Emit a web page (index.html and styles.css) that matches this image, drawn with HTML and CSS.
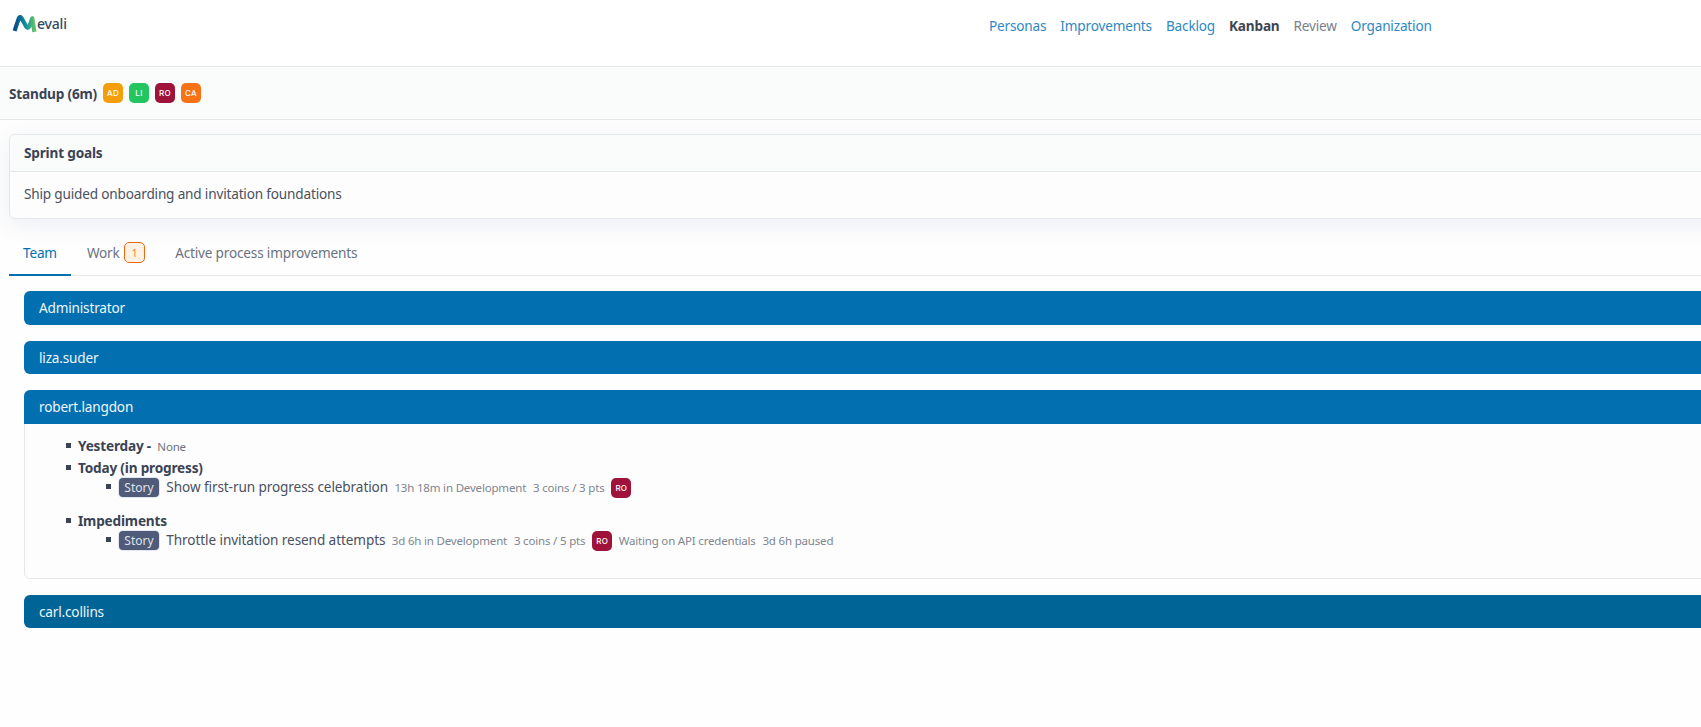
FILE: index.html
```html
<!DOCTYPE html>
<html lang="en">
<head>
    <meta charset="UTF-8">
    <title>Mevali - Kanban</title>
    <link rel="stylesheet" href="styles.css">
</head>
<body>
    <div class="page">
        <header class="topbar">
            <a class="logo" href="#">
                <svg class="logo-mark" width="25" height="21" viewBox="0 0 24 20">
                    <defs>
                        <linearGradient id="logoGrad" x1="0" y1="0" x2="1" y2="0">
                            <stop offset="0" stop-color="#0b4a88"/>
                            <stop offset="0.55" stop-color="#0f8f9f"/>
                            <stop offset="1" stop-color="#63c06a"/>
                        </linearGradient>
                    </defs>
                    <path d="M2.5 17 L6.5 5 Q7.5 2.8 9 4.5 L14 13.5 Q15.5 15 16.5 13 L19.5 5 L21.5 18" fill="none" stroke="url(#logoGrad)" stroke-width="4" stroke-linejoin="round"/>
                </svg>
                <span class="logo-text">evali</span>
            </a>
            <nav class="nav">
                <a href="#">Personas</a>
                <a href="#">Improvements</a>
                <a href="#">Backlog</a>
                <a href="#" class="active">Kanban</a>
                <a href="#" class="muted">Review</a>
                <a href="#">Organization</a>
            </nav>
        </header>

        <div class="standup">
            <strong>Standup (6m)</strong>
            <span class="avatar amber">AD</span>
            <span class="avatar green">LI</span>
            <span class="avatar wine">RO</span>
            <span class="avatar orange">CA</span>
        </div>

        <main class="content">
            <section class="card">
                <div class="card-head">Sprint goals</div>
                <div class="card-body">Ship guided onboarding and invitation foundations</div>
            </section>

            <div class="tabs">
                <a href="#" class="tab active">Team</a>
                <a href="#" class="tab">Work <span class="count">1</span></a>
                <a href="#" class="tab">Active process improvements</a>
            </div>

            <div class="team">
                <div class="panel"><div class="panel-head">Administrator</div></div>
                <div class="panel"><div class="panel-head">liza.suder</div></div>
                <div class="panel">
                    <div class="panel-head">robert.langdon</div>
                    <div class="panel-body">
                        <ul class="report">
                            <li><b>Yesterday -</b> <span class="meta none">None</span></li>
                            <li><b>Today (in progress)</b>
                                <ul>
                                    <li class="item"><span class="tag">Story</span>
                                        <span class="title">Show first-run progress celebration</span>
                                        <span class="meta">13h 18m in Development</span>
                                        <span class="meta">3 coins / 3 pts</span>
                                        <span class="avatar wine">RO</span>
                                    </li>
                                </ul>
                            </li>
                            <li><b>Impediments</b>
                                <ul>
                                    <li class="item"><span class="tag">Story</span>
                                        <span class="title">Throttle invitation resend attempts</span>
                                        <span class="meta">3d 6h in Development</span>
                                        <span class="meta">3 coins / 5 pts</span>
                                        <span class="avatar wine">RO</span>
                                        <span class="meta">Waiting on API credentials</span>
                                        <span class="meta">3d 6h paused</span>
                                    </li>
                                </ul>
                            </li>
                        </ul>
                    </div>
                </div>
                <div class="panel hover"><div class="panel-head">carl.collins</div></div>
            </div>
        </main>
    </div>
</body>
</html>
```

FILE: styles.css
```css
html, body {
    margin: 0;
    overflow-x: hidden;
    background: #fefefe;
}

body {
    font-family: "Noto Sans", "DejaVu Sans", sans-serif;
    font-size: 13.6px;
    letter-spacing: -0.18px;
    color: #334155;
}

a {
    text-decoration: none;
}

.page {
    width: 1800px;
}

.topbar {
    display: flex;
    height: 66px;
    border-bottom: 1px solid #e5e7f0;
    background: #fff;
}

.logo {
    display: flex;
    align-items: center;
    align-self: flex-start;
    margin: 13px 0 0 12px;
    width: 977px;
}

.logo-text {
    font-size: 14px;
    font-weight: 500;
    color: #2f4a63;
}

.nav {
    display: flex;
    gap: 14px;
    padding-top: 16px;
    line-height: 20px;
}

.nav a {
    color: #2f88c4;
}

.nav a.active {
    color: #3f4450;
    font-weight: 700;
}

.nav a.muted {
    color: #7a7f8a;
}

.standup {
    display: flex;
    align-items: center;
    gap: 6px;
    height: 52px;
    padding-left: 9px;
    background: #fafbfb;
    border-bottom: 1px solid #e5e7eb;
}

.standup strong {
    color: #3a4354;
}

.avatar {
    display: inline-flex;
    align-items: center;
    justify-content: center;
    width: 20px;
    height: 20px;
    border-radius: 5px;
    color: #fff;
    font-family: "Inter", sans-serif;
    font-size: 8px;
    font-weight: 500;
    letter-spacing: 0.3px;
    vertical-align: middle;
}

.amber { background: #f59e0b; }
.green { background: #22c55e; }
.wine { background: #9f1239; }
.orange { background: #f97316; }

.content {
    padding: 14px 0 0 9px;
}

.card {
    background: #fdfdfd;
    border: 1px solid #e5e7eb;
    border-radius: 6px;
    box-shadow: 0 6px 24px rgba(30, 50, 110, 0.08);
}

.card-head {
    height: 36px;
    line-height: 36px;
    padding-left: 14px;
    background: #fafbfb;
    border-bottom: 1px solid #e5e7eb;
    border-radius: 6px 6px 0 0;
    font-weight: 700;
    color: #3a4354;
}

.card-body {
    height: 46px;
    line-height: 44px;
    padding-left: 14px;
    color: #4a5160;
}

.tabs {
    display: flex;
    gap: 2px;
    height: 56px;
    border-bottom: 1px solid #e5e7eb;
}

.tab {
    display: flex;
    align-items: center;
    gap: 4.5px;
    height: 56px;
    padding: 11px 14px 0;
    box-sizing: border-box;
    color: #6b7280;
}

.tab.active {
    height: 57px;
    color: #0270b0;
    border-bottom: 2px solid #0270b0;
}

.count {
    display: inline-block;
    width: 21px;
    height: 21px;
    line-height: 19px;
    box-sizing: border-box;
    border: 1px solid #ea6a12;
    border-radius: 5px;
    background: #fff1e3;
    color: #ea8a3a;
    font-size: 11px;
    text-align: center;
}

.team {
    padding: 15px 0 0 15px;
}

.panel {
    margin-bottom: 16px;
    border: 1px solid #e5e7eb;
    border-radius: 6px;
    background: #fdfdfd;
}

.panel-head {
    height: 33.5px;
    line-height: 33px;
    padding-left: 15px;
    margin: -1px;
    background: #0270b0;
    border-radius: 6px 6px 0 0;
    color: #eef5fa;
}

.panel:not(:has(.panel-body)) .panel-head {
    border-radius: 6px;
}

.panel.hover .panel-head {
    background: #006497;
}

.panel-body {
    height: 155px;
    box-sizing: border-box;
    padding-top: 13px;
}

.report,
.report ul {
    margin: 0;
    padding: 0;
    list-style: none;
}

.report {
    padding-left: 53px;
}

.report > li {
    margin-bottom: 1px;
    line-height: 20px;
}

.report > li::before {
    content: "";
    display: inline-block;
    width: 5px;
    height: 5px;
    margin: 0 7px 2px -12px;
    background: #3a4354;
    vertical-align: middle;
}

.report > li > b {
    color: #3a4354;
}

.report ul {
    padding-left: 41px;
    margin-bottom: 14px;
}

.item {
    line-height: 20px;
    height: 20px;
    margin-top: -1px;
}

.item::before {
    content: "";
    display: inline-block;
    width: 5px;
    height: 5px;
    margin: 0 8px 2px -13px;
    background: #3a4354;
    vertical-align: middle;
}

.tag {
    display: inline-block;
    height: 19px;
    line-height: 19px;
    width: 40px;
    text-align: center;
    border-radius: 4px;
    background: #4f5b78;
    box-shadow: 0 0 0 1px rgba(200, 205, 220, 0.5);
    color: #dfe3ea;
    font-size: 12px;
    letter-spacing: 0;
    margin-right: 4px;
    vertical-align: middle;
}

.title {
    color: #4a5160;
    letter-spacing: -0.1px;
    margin-right: 3px;
}

.meta {
    color: #808590;
    font-size: 11.5px;
    margin-right: 3.5px;
}

.item .avatar {
    margin-right: 3px;
}

.meta.none {
    margin-left: 3px;
    color: #6b7280;
}
```
